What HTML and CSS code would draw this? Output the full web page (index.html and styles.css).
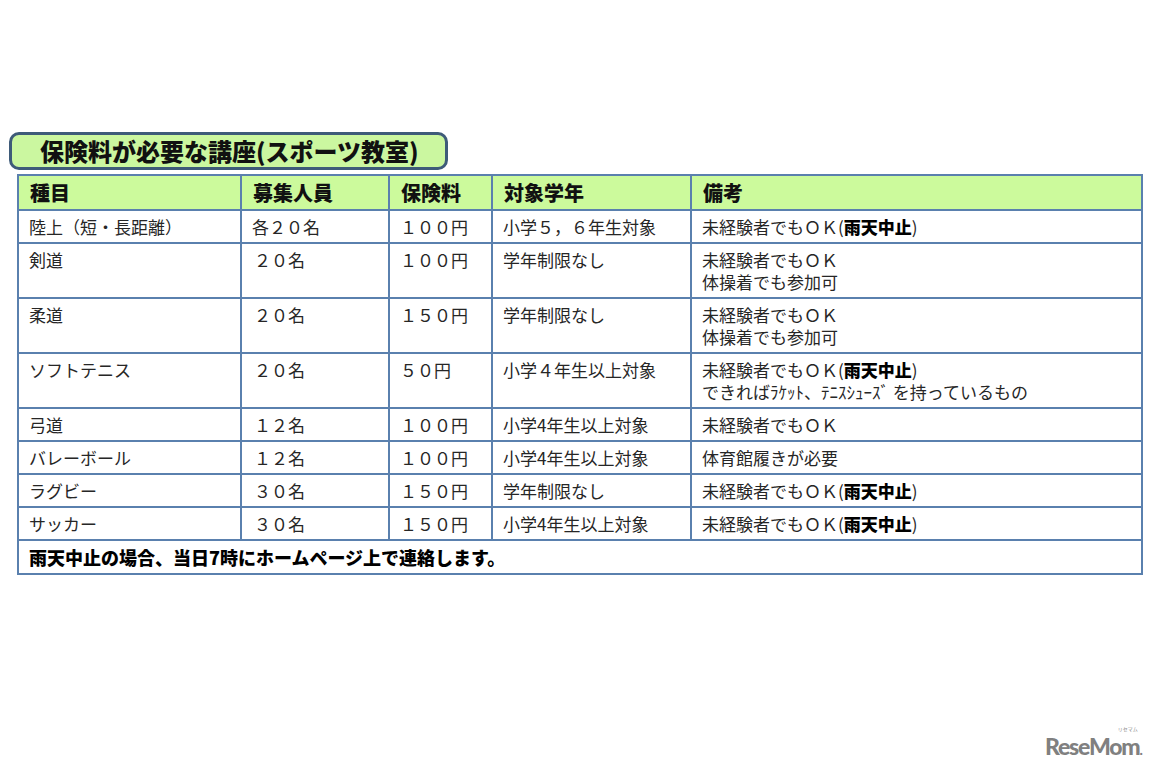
FILE: index.html
```html
<!DOCTYPE html>
<html lang="ja">
<head>
<meta charset="utf-8">
<title>保険料が必要な講座</title>
<link rel="stylesheet" href="styles.css">
</head>
<body>
<div class="page">
  <div class="title">保険料が必要な講座(スポーツ教室)</div>
  <table class="grid">
    <colgroup>
      <col class="c1"><col class="c2"><col class="c3"><col class="c4"><col class="c5">
    </colgroup>
    <thead>
      <tr><th>種目</th><th>募集人員</th><th>保険料</th><th>対象学年</th><th>備考</th></tr>
    </thead>
    <tbody>
      <tr><td>陸上（短・長距離）</td><td>各２０名</td><td>１００円</td><td>小学５，６年生対象</td><td>未経験者でもＯＫ(<b>雨天中止</b>)</td></tr>
      <tr><td>剣道</td><td class="ind">２０名</td><td>１００円</td><td>学年制限なし</td><td>未経験者でもＯＫ<br>体操着でも参加可</td></tr>
      <tr><td>柔道</td><td class="ind">２０名</td><td>１５０円</td><td>学年制限なし</td><td>未経験者でもＯＫ<br>体操着でも参加可</td></tr>
      <tr><td>ソフトテニス</td><td class="ind">２０名</td><td>５０円</td><td>小学４年生以上対象</td><td>未経験者でもＯＫ(<b>雨天中止</b>)<br>できればﾗｹｯﾄ、ﾃﾆｽｼｭｰｽﾞ を持っているもの</td></tr>
      <tr><td>弓道</td><td class="ind">１２名</td><td>１００円</td><td>小学4年生以上対象</td><td>未経験者でもＯＫ</td></tr>
      <tr><td>バレーボール</td><td class="ind">１２名</td><td>１００円</td><td>小学4年生以上対象</td><td>体育館履きが必要</td></tr>
      <tr><td>ラグビー</td><td class="ind">３０名</td><td>１５０円</td><td>学年制限なし</td><td>未経験者でもＯＫ(<b>雨天中止</b>)</td></tr>
      <tr><td>サッカー</td><td class="ind">３０名</td><td>１５０円</td><td>小学4年生以上対象</td><td>未経験者でもＯＫ(<b>雨天中止</b>)</td></tr>
      <tr><td class="note" colspan="5">雨天中止の場合、当日7時にホームページ上で連絡します。</td></tr>
    </tbody>
  </table>
  <div class="logo"><span class="kana">リセマム</span>ReseMom<span class="dot">.</span></div>
</div>
</body>
</html>
```

FILE: styles.css
```css
html, body {
  margin: 0;
  padding: 0;
  background: #ffffff;
}

body {
  font-family: "Noto Sans CJK JP", "Noto Sans", sans-serif;
  color: #1a1a1a;
}

.page {
  position: relative;
  width: 1156px;
  height: 771px;
  box-sizing: border-box;
  padding: 132px 0 0 9px;
}

.title {
  box-sizing: border-box;
  width: 439px;
  height: 38px;
  border: 3px solid #3e5b79;
  border-radius: 10px;
  background: #cbf7a0;
  padding-left: 28px;
  font-size: 24px;
  font-weight: 900;
  line-height: 31px;
  color: #111;
}

.grid {
  margin: 4px 0 0 8px;
  width: 1124px;
  border-collapse: collapse;
  table-layout: fixed;
  border: 2px solid #5a80ae;
}

.c1 { width: 223px; }
.c2 { width: 148px; }
.c3 { width: 103px; }
.c4 { width: 199px; }
.c5 { width: 451px; }

.grid th,
.grid td {
  border: 2px solid #5a80ae;
  text-align: left;
  vertical-align: top;
}

.grid th {
  background: #ccfa9c;
  font-size: 20px;
  font-weight: 900;
  line-height: 24px;
  padding: 5px 10px 4px 11px;
  color: #111;
}

.grid td {
  font-size: 17px;
  font-weight: 400;
  line-height: 22px;
  padding: 5px 10px 4px 10px;
  color: #262626;
  white-space: nowrap;
}

.grid td.ind {
  padding-left: 12px;
}

.grid td b {
  font-weight: 900;
  color: #000;
}

.grid td.note {
  font-size: 18px;
  font-weight: 900;
  color: #000;
  padding: 5px 10px 5px 10px;
  line-height: 22px;
}

.logo {
  position: absolute;
  left: 1045px;
  top: 733px;
  font-family: "Lato", "Open Sans", sans-serif;
  font-weight: 900;
  font-size: 23px;
  letter-spacing: -1.2px;
  color: #808080;
  line-height: 26px;
}

.logo .kana {
  position: absolute;
  right: 4px;
  top: -7px;
  font-family: "Noto Sans CJK JP", sans-serif;
  font-size: 5px;
  font-weight: 400;
  letter-spacing: 0;
  line-height: 6px;
  color: #888;
}

.logo .dot {
  font-size: 14px;
}
```
